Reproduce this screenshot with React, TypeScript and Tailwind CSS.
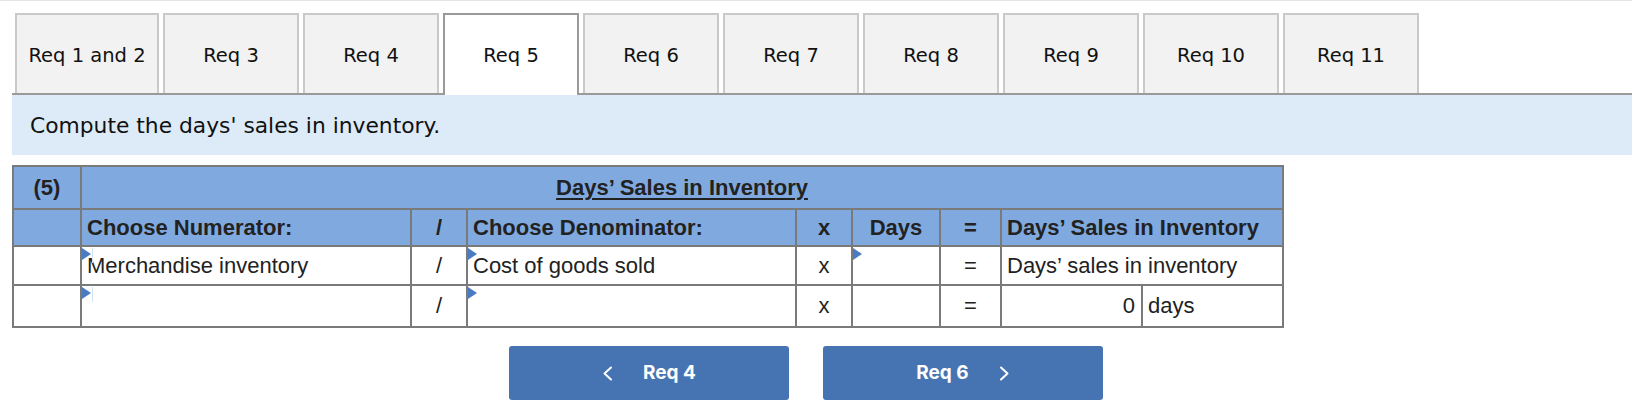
import React from 'react'

const tabs = ['Req 1 and 2', 'Req 3', 'Req 4', 'Req 5', 'Req 6', 'Req 7', 'Req 8', 'Req 9', 'Req 10', 'Req 11']
const activeTab = 'Req 5'

// small blue corner marker that shows a cell is a dropdown
function Marker({ caret = false }: { caret?: boolean }) {
  return (
    <>
      <span className="absolute left-0 top-[1px] h-0 w-0 border-y-[6px] border-l-[9px] border-y-transparent border-l-[#4a7cc3]" />
      {caret && <span className="absolute left-[10px] top-[1px] h-[15px] w-px bg-[#d3e2f3]" />}
    </>
  )
}

function Head({ children, className = '' }: { children?: React.ReactNode; className?: string }) {
  return <div className={`flex items-center bg-[#80aadf] font-bold text-[#222] ${className}`}>{children}</div>
}

function Cell({ children, className = '' }: { children?: React.ReactNode; className?: string }) {
  return <div className={`relative flex items-center bg-white text-[#222] ${className}`}>{children}</div>
}

export default function App() {
  return (
    <div className="h-[410px] w-[1644px] overflow-hidden bg-white">
      <div className="w-[1632px]">
        <div className="h-px bg-[#e4e4e4]" />

        {/* Tabs */}
        <div className="ml-[12px] mt-[12px] flex h-[82px] items-end gap-[4px] border-b-2 border-[#9a9a9a] pl-[3px] font-['DejaVu_Sans',Verdana,sans-serif] text-[19.5px] text-[#111]">
          {tabs.map((t, i) => {
            const active = t === activeTab
            return (
              <div
                key={t}
                className={`flex items-center justify-center border-2 border-b-0 pt-[4px] ${i === 0 ? 'w-[144px]' : 'w-[136px]'} ${
                  active ? '-mb-[2px] h-[82px] border-[#9a9a9a] bg-white pb-[2px]' : 'h-[80px] border-[#c9c9c9] bg-[#f2f2f2]'
                }`}
              >
                {t}
              </div>
            )
          })}
        </div>

        {/* Instruction */}
        <div className="ml-[12px] flex h-[60px] items-center bg-[#ddebf8] pl-[18px] pt-[3px] font-['DejaVu_Sans',Verdana,sans-serif] text-[21.8px] text-[#111]">
          Compute the days' sales in inventory.
        </div>

        {/* Worksheet */}
        <div className="ml-[12px] mt-[10px] grid w-fit grid-cols-[66px_328px_54px_327px_54px_86px_59px_139px_139px] grid-rows-[41px_35px_37px_40px] gap-[2px] bg-[#7a7a7a] p-[2px] font-['Liberation_Sans',Arial,sans-serif] text-[22px] leading-none">
          <Head className="justify-center">(5)</Head>
          <Head className="col-span-8 justify-center">
            <span className="underline decoration-[1.5px] underline-offset-[3px]">Days’ Sales in Inventory</span>
          </Head>

          <Head />
          <Head className="pl-[5px]">Choose Numerator:</Head>
          <Head className="justify-center">/</Head>
          <Head className="pl-[5px]">Choose Denominator:</Head>
          <Head className="justify-center">x</Head>
          <Head className="justify-center">Days</Head>
          <Head className="justify-center">=</Head>
          <Head className="col-span-2 pl-[5px]">Days’ Sales in Inventory</Head>

          <Cell />
          <Cell className="pl-[5px]">
            <Marker caret />
            Merchandise inventory
          </Cell>
          <Cell className="justify-center">/</Cell>
          <Cell className="pl-[5px]">
            <Marker />
            Cost of goods sold
          </Cell>
          <Cell className="justify-center">x</Cell>
          <Cell>
            <Marker />
          </Cell>
          <Cell className="justify-center">=</Cell>
          <Cell className="col-span-2 pl-[5px]">Days’ sales in inventory</Cell>

          <Cell />
          <Cell>
            <Marker caret />
          </Cell>
          <Cell className="justify-center">/</Cell>
          <Cell>
            <Marker />
          </Cell>
          <Cell className="justify-center">x</Cell>
          <Cell />
          <Cell className="justify-center">=</Cell>
          <Cell className="justify-end pr-[6px]">0</Cell>
          <Cell className="pl-[5px]">days</Cell>
        </div>

        {/* Navigation */}
        <div className="ml-[509px] mt-[18px] flex gap-[34px] font-['Inter',sans-serif] text-[19px] font-bold text-white">
          <button className="flex h-[54px] w-[280px] items-center justify-center gap-[30px] rounded-[3px] bg-[#4674b2]">
            <svg width="11" height="15" viewBox="0 0 11 15" fill="none" stroke="white" strokeWidth="2" strokeLinecap="round" strokeLinejoin="round">
              <polyline points="9,1.5 2.5,7.5 9,13.5" />
            </svg>
            <span>Req 4</span>
          </button>
          <button className="flex h-[54px] w-[280px] items-center justify-center gap-[30px] rounded-[3px] bg-[#4674b2]">
            <span>Req 6</span>
            <svg width="11" height="15" viewBox="0 0 11 15" fill="none" stroke="white" strokeWidth="2" strokeLinecap="round" strokeLinejoin="round">
              <polyline points="2,1.5 8.5,7.5 2,13.5" />
            </svg>
          </button>
        </div>
      </div>
    </div>
  )
}
